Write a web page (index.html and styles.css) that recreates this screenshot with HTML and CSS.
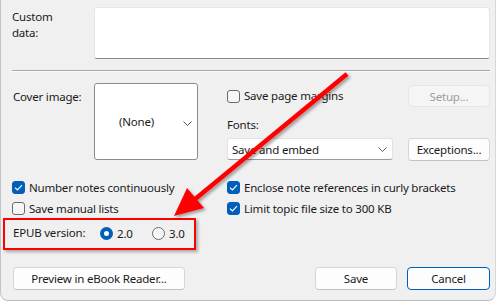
FILE: index.html
```html
<!DOCTYPE html>
<html>
<head>
<meta charset="utf-8">
<link rel="stylesheet" href="styles.css">
</head>
<body>
<div class="window">
  <div class="custom-row">
    <div class="lbl custom-lbl">Custom<br>data:</div>
    <div class="textarea"></div>
  </div>
  <div class="sep"></div>
  <div class="cover-grid">
    <div class="lbl cover-lbl">Cover image:</div>
    <div class="cover-box"><span class="none">(None)</span><svg class="chev" width="9" height="5" viewBox="0 0 9 5"><path d="M0.5 0.5 L4.5 4.5 L8.5 0.5" fill="none" stroke="#555" stroke-width="1"/></svg></div>
    <div class="check margins"><span class="cb"></span><span>Save page margins</span></div>
    <div class="btn disabled setup">Setup...</div>
    <div class="lbl fonts-lbl">Fonts:</div>
    <div class="combo"><span>Save and embed</span><svg class="chev" width="9" height="5" viewBox="0 0 9 5"><path d="M0.5 0.5 L4.5 4.5 L8.5 0.5" fill="none" stroke="#555" stroke-width="1"/></svg></div>
    <div class="btn exceptions">Exceptions...</div>
  </div>
  <div class="checks">
    <div class="check"><span class="cb on"><svg width="9" height="7" viewBox="0 0 9 7"><path d="M1 3.6 L3.4 6 L8 1.2" fill="none" stroke="#fff" stroke-width="1.2"/></svg></span><span>Number notes continuously</span></div>
    <div class="check"><span class="cb on"><svg width="9" height="7" viewBox="0 0 9 7"><path d="M1 3.6 L3.4 6 L8 1.2" fill="none" stroke="#fff" stroke-width="1.2"/></svg></span><span>Enclose note references in curly brackets</span></div>
    <div class="check"><span class="cb"></span><span>Save manual lists</span></div>
    <div class="check"><span class="cb on"><svg width="9" height="7" viewBox="0 0 9 7"><path d="M1 3.6 L3.4 6 L8 1.2" fill="none" stroke="#fff" stroke-width="1.2"/></svg></span><span>Limit topic file size to 300 KB</span></div>
  </div>
  <div class="epub">
    <span class="lbl epub-lbl">EPUB version:</span>
    <span class="radio-item"><span class="rb on"></span><span>2.0</span></span>
    <span class="radio-item"><span class="rb"></span><span>3.0</span></span>
  </div>
  <div class="buttons">
    <div class="btn preview">Preview in eBook Reader...</div>
    <div class="spacer"></div>
    <div class="btn save">Save</div>
    <div class="btn cancel">Cancel</div>
  </div>
  <div class="highlight"></div>
  <svg class="arrow" width="500" height="302" viewBox="0 0 500 302">
    <defs>
      <filter id="sh" x="-20%" y="-20%" width="140%" height="140%">
        <feDropShadow dx="2" dy="2" stdDeviation="1.5" flood-color="#000" flood-opacity="0.35"/>
      </filter>
    </defs>
    <g filter="url(#sh)">
      <line x1="347" y1="74" x2="194" y2="200" stroke="#ff0000" stroke-width="4.5" stroke-linecap="butt"/>
      <polygon points="174,216 187,188 204,208" fill="#ff0000"/>
    </g>
  </svg>
</div>
</body>
</html>
```
FILE: styles.css
```css
* { box-sizing: border-box; }
html, body { margin: 0; padding: 0; background: #ffffff; }
body {
  width: 500px;
  height: 302px;
  overflow: hidden;
  font-family: "Noto Sans", "Open Sans", sans-serif;
  font-size: 11.5px;
  letter-spacing: -0.2px;
  color: #1a1a1a;
}
.window {
  position: relative;
  width: 496px;
  height: 301px;
  background: #f0f0f0;
  border-left: 1px solid #c4c4c4;
  border-right: 1px solid #d8d8d8;
  border-bottom: 1px solid #bdbdbd;
  border-radius: 0 0 8px 8px;
  padding: 7px 5px 0 10px;
}
.lbl { line-height: 16px; }
.custom-row { display: flex; height: 52px; }
.custom-lbl { width: 83px; padding: 2px 0 0 1px; }
.textarea {
  flex: 1;
  background: #ffffff;
  border: 1px solid #e6e6e6;
  border-bottom: 1px solid #8a8a8a;
  border-radius: 3px;
}
.sep {
  margin: 11px 0 0 1px;
  height: 2px;
  border-top: 1px solid #a8a8a8;
  border-bottom: 1px solid #fafafa;
}
.cover-grid {
  margin-top: 11px;
  margin-left: 1px;
  display: grid;
  grid-template-columns: 82px 104px 29px 166px 15px 82px;
  grid-template-rows: 26px 29px 22px;
}
.cover-lbl { grid-column: 1; grid-row: 1; padding: 6px 0 0 1px; }
.cover-box {
  grid-column: 2; grid-row: 1 / 4;
  background: #ffffff;
  border: 1px solid #8c8c8c;
  border-radius: 3px;
  display: flex;
  align-items: center;
  justify-content: center;
  position: relative;
  padding-right: 19px;
}
.cover-box .chev { position: absolute; right: 5px; top: 37px; }
.check { display: flex; align-items: center; gap: 4px; line-height: 16px; white-space: nowrap; }
.cb {
  width: 13px; height: 13px;
  border: 1px solid #6b6b6b;
  border-radius: 3px;
  background: #f6f6f6;
  display: flex; align-items: center; justify-content: center;
  flex: none;
}
.cb.on { background: #005fb8; border-color: #005fb8; }
.margins { grid-column: 4; grid-row: 1; align-self: center; }
.btn {
  background: #fdfdfd;
  border: 1px solid #d6d6d6;
  border-bottom-color: #c2c2c2;
  border-radius: 4px;
  display: flex; align-items: center; justify-content: center;
  height: 23px;
  white-space: nowrap;
}
.setup { grid-column: 6; grid-row: 1; align-self: center; height: 22px; background: #f5f5f5; border-color: #e5e5e5; color: #9d9d9d; }
.fonts-lbl { grid-column: 4; grid-row: 2; align-self: end; padding-bottom: 5px; }
.combo {
  grid-column: 4; grid-row: 3;
  background: #ffffff;
  border: 1px solid #e2e2e2;
  border-bottom-color: #9a9a9a;
  border-radius: 3px;
  display: flex; align-items: center; justify-content: space-between;
  padding: 0 5px 0 4px;
}
.exceptions { grid-column: 6; grid-row: 3; }
.checks {
  margin-top: 17px;
  margin-left: 1px;
  display: grid;
  grid-template-columns: 215px 1fr;
  grid-auto-rows: 21px;
}
.epub {
  margin-top: 4px;
  margin-left: 2px;
  height: 20px;
  display: flex; align-items: center;
}
.epub-lbl { width: 87px; }
.radio-item { display: flex; align-items: center; gap: 4px; width: 52px; }
.rb {
  width: 13px; height: 13px; border-radius: 50%;
  border: 1px solid #6b6b6b; background: #f6f6f6;
  flex: none;
}
.rb.on { border: 4px solid #005fb8; background: #ffffff; }
.buttons {
  margin-top: 24px;
  margin-left: 2px;
  display: flex;
  gap: 10px;
}
.preview { width: 172px; }
.spacer { flex: 1; }
.save { width: 82px; }
.cancel { width: 83px; border: 1px solid #005fb8; }
.highlight {
  position: absolute;
  left: 2px; top: 218px;
  width: 193px; height: 32px;
  border: 2px solid #ff0000;
  box-shadow: 2px 2px 3px rgba(0,0,0,0.3);
}
.arrow { position: absolute; left: -1px; top: 0; pointer-events: none; }
```
